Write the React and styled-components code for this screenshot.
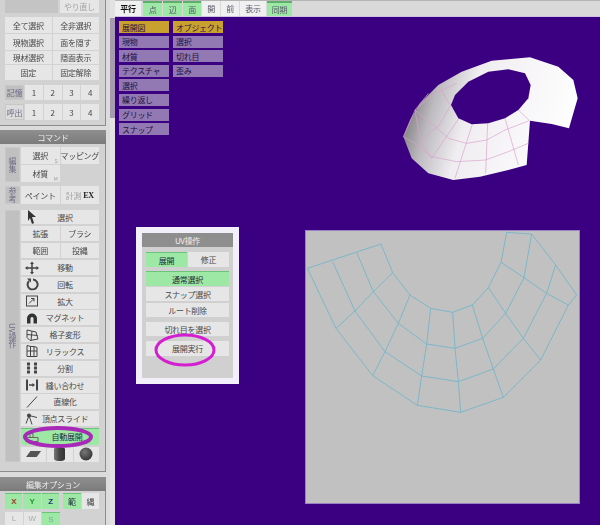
import React from "react";
import styled, { createGlobalStyle } from "styled-components";

const Global = createGlobalStyle`
  html, body { margin: 0; padding: 0; background: #3b0082; }
  * { box-sizing: border-box; }
`;

const Page = styled.div`
  width: 600px;
  height: 525px;
  display: flex;
  overflow: hidden;
  font-family: "Noto Sans CJK JP", "Noto Sans", sans-serif;
  font-size: 8px;
  letter-spacing: -0.3px;
  color: #484848;
  filter: blur(0.3px);
`;

const Side = styled.div`
  width: 115px;
  flex: none;
  display: flex;
  background: #dcdcdc;
`;

const SideInner = styled.div`
  width: 110px;
  display: flex;
  flex-direction: column;
`;

const Scroll = styled.div`
  width: 5px;
  background: #e2e2e2;
  display: flex;
  flex-direction: column;
`;

const Thumb = styled.div`
  height: 100px;
  margin-top: 18px;
  background: #a79bb0;
`;

const TopPanel = styled.div`
  width: 106px;
  height: 126px;
  flex: none;
  background: #d2d2d2;
  border-right: 1px solid #8c8c8c;
  border-bottom: 1px solid #8c8c8c;
  padding: 0 6px 0 5px;
  display: flex;
  flex-direction: column;
`;

const Row = styled.div`
  display: flex;
  gap: ${(p) => p.$gap ?? 1}px;
  height: ${(p) => p.$h}px;
  margin-bottom: ${(p) => p.$mb ?? 1}px;
  flex: none;
`;

const Btn = styled.div`
  flex: ${(p) => p.$flex ?? 1};
  min-width: 0;
  display: flex;
  align-items: center;
  justify-content: center;
  position: relative;
  white-space: nowrap;
  background: ${(p) => (p.$on ? "#9ee8a6" : p.$off ? "transparent" : "#e6e6e6")};
  color: ${(p) => (p.$on ? "#1c2a3a" : p.$dim ? "#a4a4a4" : "#484848")};
  border-top: ${(p) => (p.$on ? "1px solid #6cc47a" : "none")};
  padding: ${(p) => p.$pad ?? "0"};
`;

const Blank = styled.div`
  flex: ${(p) => p.$flex ?? 1};
  background: ${(p) => p.$bg ?? "transparent"};
`;

const Key = styled.span`
  position: absolute;
  right: 2px;
  bottom: 0;
  font-size: 5px;
  color: #999;
`;

const Ex = styled.b`
  font-family: "Liberation Serif", serif;
  font-size: 8px;
  color: #222;
  margin-left: 2px;
`;

const Tag = styled.div`
  width: ${(p) => p.$w ?? 15}px;
  flex: none;
  display: flex;
  align-items: center;
  justify-content: center;
  white-space: nowrap;
  background: ${(p) => (p.$light ? "#dcdcdc" : "#c0c0c0")};
  color: #716a86;
  border: 1px solid #c8c8c8;
`;

const BarHead = styled.div`
  width: 106px;
  height: 14px;
  flex: none;
  display: flex;
  align-items: center;
  justify-content: center;
  color: #eee;
  margin-top: ${(p) => p.$mt}px;
  background: linear-gradient(#8f8f8f, #7b7b7b);
`;

const CmdPanel = styled.div`
  width: 106px;
  height: 328px;
  flex: none;
  background: #d2d2d2;
  border-right: 1px solid #8c8c8c;
  border-bottom: 1px solid #8c8c8c;
  padding: 3px 6px 0 5px;
  display: flex;
  flex-direction: column;
`;

const Group = styled.div`
  display: flex;
  gap: 1px;
  margin-bottom: ${(p) => p.$mb}px;
`;

const VTag = styled(Tag)`
  writing-mode: vertical-rl;
`;

const GroupBody = styled.div`
  flex: 1;
  min-width: 0;
  display: flex;
  flex-direction: column;
`;

const ToolIcon = styled.span`
  position: absolute;
  left: 3px;
  top: 50%;
  transform: translateY(-50%);
  display: flex;
`;

const OptPanel = styled.div`
  width: 106px;
  flex: 1;
  background: #d2d2d2;
  border-right: 1px solid #8c8c8c;
  padding: 2px 6px 0 5px;
`;

const Axis = styled.span`
  font-family: "Liberation Sans", sans-serif;
  font-weight: ${(p) => (p.$thin ? 400 : 700)};
  color: ${(p) => p.$c};
`;

const Main = styled.div`
  flex: 1;
  min-width: 0;
  display: flex;
  flex-direction: column;
`;

const TopBar = styled.div`
  height: 17px;
  flex: none;
  display: flex;
  gap: 1px;
  background: #d9d9d9;
  border-top: 1px solid #b4b4b4;
  border-bottom: 1px solid #cfc4e4;
`;

const Tab = styled.div`
  width: ${(p) => p.$w}px;
  margin-right: ${(p) => p.$mr ?? 0}px;
  display: flex;
  align-items: center;
  justify-content: center;
  background: ${(p) => (p.$on ? "#9ee8a6" : "#f0f0f0")};
  border-top: ${(p) => (p.$on ? "2px solid #5fae6c" : "none")};
  color: ${(p) => (p.$strong ? "#111" : "#556")};
  font-weight: ${(p) => (p.$strong ? 700 : 400)};
`;

const Canvas = styled.div`
  flex: 1;
  position: relative;
  background: #3b0082;
`;

const Menus = styled.div`
  display: flex;
  gap: 4px;
  padding: 4px 0 0 4px;
`;

const MenuCol = styled.div`
  width: 50px;
  display: flex;
  flex-direction: column;
  gap: 2.6px;
`;

const MenuItem = styled.div`
  height: 12px;
  padding-left: 3px;
  display: flex;
  align-items: center;
  white-space: nowrap;
  color: #1d1040;
  background: ${(p) => (p.$on ? "#c9a12f" : "#9379b3")};
`;

const Mesh = styled.svg`
  position: absolute;
  left: 280px;
  top: 13px;
`;

const UvPane = styled.div`
  position: absolute;
  left: 191px;
  top: 214px;
  width: 273px;
  height: 272px;
  background: #c1c1c1;
  box-shadow: 0 0 0 1px #9a80c4;
`;

const UvFloat = styled.div`
  position: absolute;
  left: 21px;
  top: 210px;
  width: 103px;
  height: 157px;
  background: #d0d0d0;
  border: 6px solid #f2effa;
  display: flex;
  flex-direction: column;
`;

const FloatHead = styled.div`
  height: 14px;
  flex: none;
  display: flex;
  align-items: center;
  justify-content: center;
  color: #eee;
  background: #8e8e8e;
  margin-bottom: 5px;
`;

const FloatBody = styled.div`
  padding: 0 4px;
  display: flex;
  flex-direction: column;
`;

const Ring = styled.svg`
  position: absolute;
  left: ${(p) => p.$x}px;
  top: ${(p) => p.$y}px;
  pointer-events: none;
`;

const toPts = (a) => a.map((p) => p.join(",")).join(" ");

const meshOuter = [[25,320],[45,270],[75,220],[130,165],[200,125],[290,92],[405,82],[490,110],[535,150],[548,205],[522,295],[470,282],[405,272],[400,340],[395,405],[340,420],[255,440],[175,450],[100,430],[50,385]];
const meshHole = [[168,225],[180,195],[220,155],[280,125],[340,118],[390,130],[407,165],[400,205],[370,240],[330,265],[280,280],[230,283],[190,265]];
const meshLines = [
  [[370,240],[403,272]],
  [[330,265],[370,405]],
  [[278,280],[272,430]],
  [[232,283],[180,445]],
  [[192,265],[110,385]],
  [[403,272],[330,300],[275,330],[215,340],[160,325],[120,290],[60,240],[100,190]],
  [[400,340],[340,365],[272,390],[185,395],[110,380],[60,340],[25,320]],
  [[168,225],[130,290],[75,330]],
  [[185,160],[120,190],[60,240],[25,320]],
  [[130,165],[165,225]],
  [[60,240],[75,330],[110,385]],
];

const uvLines = [
  [[22,130],[243,57],[278,143],[330,210],[392,250],[458,262],[517,240],[565,188],[603,112],[620,22],[695,27],[767,120],[830,210],[805,240],[722,405],[610,517],[482,562],[352,541],[218,452],[108,310],[22,130]],
  [[170,82],[220,200],[295,295],[380,357],[465,370],[548,340],[617,265],[672,158],[695,27]],
  [[98,110],[165,258],[255,380],[365,453],[475,470],[580,432],[670,340],[740,205],[767,120]],
  [[278,143],[220,200],[165,258],[108,310]],
  [[330,210],[295,295],[255,380],[218,452]],
  [[392,250],[380,357],[365,453],[352,541]],
  [[458,262],[465,370],[475,470],[482,562]],
  [[517,240],[548,340],[580,432],[610,517]],
  [[565,188],[617,265],[670,340],[722,405]],
  [[603,112],[672,158],[740,205],[805,240]],
];

const Ic = ({ children }) => (
  <ToolIcon>
    <svg width="16" height="13" viewBox="0 0 16 13" fill="none" stroke="#444" strokeWidth="1">
      {children}
    </svg>
  </ToolIcon>
);

const tools = [
  ["移動", <><path d="M8 1v11M2 6.500h12" strokeWidth="1.500" /><path d="M8 0l2 2.500H6zM8 13l2-2.500H6zM1 6.500L3.500 4.500v4zM15 6.500L12.500 4.500v4z" fill="#444" stroke="none" /></>],
  ["回転", <><path d="M5 3.500a5 5 0 1 0 4-1.500" strokeWidth="2" /><path d="M3 1h4v4z" fill="#444" stroke="none" /></>],
  ["拡大", <><rect x="2.500" y="1.500" width="11" height="10" /><path d="M5 9l5-5M7 4h3v3" /></>],
  ["マグネット", <path d="M3 12V7a5 5 0 0 1 10 0v5h-3.500V7a1.500 1.500 0 0 0-3 0v5z" fill="#333" stroke="none" />],
  ["格子変形", <><path d="M3 1.500l9 2 2 7-8 1.500-3-3z" /><path d="M8 2.500L7 12M3 6l10.500 1" /></>],
  ["リラックス", <><path d="M3 1l4 1 3 0 3 1v9H3z" /><path d="M6.500 2v10M10 2v10M3 6.500h10" /></>],
  ["分割", <><rect x="3" y="1" width="3" height="11" fill="#444" stroke="none" /><rect x="10" y="1" width="3" height="11" fill="#444" stroke="none" /><path d="M3 4.500h3M3 8.500h3M10 4.500h3M10 8.500h3" stroke="#e6e6e6" /></>],
  ["縫い合わせ", <><rect x="2" y="1" width="2" height="11" fill="#444" stroke="none" /><rect x="12" y="1" width="2" height="11" fill="#444" stroke="none" /><path d="M5 6.500h5" strokeWidth="1.500" /><path d="M11 6.500L8.500 4.500v4z" fill="#444" stroke="none" /></>],
  ["直線化", <path d="M3 12L13 1" />],
  ["頂点スライド", <><circle cx="5" cy="3" r="2" fill="#444" stroke="none" /><path d="M5 3l8 2M5 3l3 9M5 3L2 11" /></>],
];

function App() {
  return (
    <Page>
      <Global />
      <Side>
        <SideInner>
          <TopPanel>
            <Row $h={13} $gap={2} $mb={4}>
              <Blank $flex={1.35} $bg="#c4c4c4" />
              <Btn $dim>やり直し</Btn>
            </Row>
            <Row $h={16}><Btn>全て選択</Btn><Btn>全非選択</Btn></Row>
            <Row $h={16}><Btn>現物選択</Btn><Btn>面を隠す</Btn></Row>
            <Row $h={13}><Btn>現材選択</Btn><Btn>隠面表示</Btn></Row>
            <Row $h={15} $mb={5}><Btn>固定</Btn><Btn>固定解除</Btn></Row>
            <Row $h={15} $mb={4}>
              <Tag $w={19}>記憶</Tag>
              <Btn>1</Btn><Btn>2</Btn><Btn>3</Btn><Btn>4</Btn>
            </Row>
            <Row $h={16} $mb={0}>
              <Tag $w={19} $light>呼出</Tag>
              <Btn>1</Btn><Btn>2</Btn><Btn>3</Btn><Btn>4</Btn>
            </Row>
          </TopPanel>
          <BarHead $mt={4}>コマンド</BarHead>
          <CmdPanel>
            <Group $mb={4}>
              <VTag>編集</VTag>
              <GroupBody>
                <Row $h={17}>
                  <Btn>選択<Key>S</Key></Btn>
                  <Btn>マッピング</Btn>
                </Row>
                <Row $h={17} $mb={0}>
                  <Btn>材質<Key>M</Key></Btn>
                  <Blank />
                </Row>
              </GroupBody>
            </Group>
            <Group $mb={6}>
              <VTag>参考</VTag>
              <GroupBody>
                <Row $h={18} $mb={0}>
                  <Btn>ペイント</Btn>
                  <Btn $dim>計測<Ex>EX</Ex></Btn>
                </Row>
              </GroupBody>
            </Group>
            <Group $mb={0}>
              <VTag>UV操作</VTag>
              <GroupBody>
                <Row $h={14} $mb={2}>
                  <Btn $pad="0 0 0 10px">
                    <ToolIcon>
                      <svg width="14" height="14" viewBox="0 0 14 14"><path d="M4 0l8 7H8l2 6-2 1-2-6-2 3z" fill="#333" /></svg>
                    </ToolIcon>
                    選択
                  </Btn>
                </Row>
                <Row $h={15} $mb={2}><Btn>拡張</Btn><Btn>ブラシ</Btn></Row>
                <Row $h={15} $mb={2}><Btn>範囲</Btn><Btn>投縄</Btn></Row>
                {tools.map(([label, icon]) => (
                  <Row $h={15} $mb={1.8} key={label}>
                    <Btn $pad="0 0 0 10px"><Ic>{icon}</Ic>{label}</Btn>
                  </Row>
                ))}
                <Row $h={17} $mb={2}>
                  <Btn $on $pad="0 0 0 14px">
                    <Ic><path d="M2 7h12v4H2zM6 3h3v4H6z" stroke="#666" /></Ic>
                    自動展開
                  </Btn>
                </Row>
                <Row $h={15} $mb={0}>
                  <Btn>
                    <svg width="16" height="8" viewBox="0 0 18 9"><path d="M5 1h12l-5 7H0z" fill="#555" /></svg>
                  </Btn>
                  <Btn>
                    <svg width="11" height="14" viewBox="0 0 11 14">
                      <defs>
                        <linearGradient id="cyl" x1="0" x2="1" y1="0" y2="0">
                          <stop offset="0" stopColor="#777" />
                          <stop offset="0.5" stopColor="#444" />
                          <stop offset="1" stopColor="#333" />
                        </linearGradient>
                      </defs>
                      <path d="M0 2a5.500 2 0 0 1 11 0v10a5.500 2 0 0 1-11 0z" fill="url(#cyl)" />
                    </svg>
                  </Btn>
                  <Btn>
                    <svg width="14" height="14" viewBox="0 0 14 14">
                      <defs>
                        <radialGradient id="ball" cx="0.4" cy="0.35" r="0.7">
                          <stop offset="0" stopColor="#777" />
                          <stop offset="1" stopColor="#333" />
                        </radialGradient>
                      </defs>
                      <circle cx="7" cy="7" r="6.500" fill="url(#ball)" />
                    </svg>
                  </Btn>
                </Row>
              </GroupBody>
            </Group>
          </CmdPanel>
          <BarHead $mt={5}>編集オプション</BarHead>
          <OptPanel>
            <Row $h={16} $mb={3}>
              <Btn $on><Axis $c="#a33">X</Axis></Btn>
              <Btn $on><Axis $c="#1f9a2a">Y</Axis></Btn>
              <Btn $on><Axis $c="#237">Z</Axis></Btn>
              <Btn $on style={{ marginLeft: 3 }}>範</Btn>
              <Btn>縄</Btn>
            </Row>
            <Row $h={13} $mb={0}>
              <Btn $dim><Axis $thin $c="#aaa">L</Axis></Btn>
              <Btn $dim><Axis $thin $c="#aaa">W</Axis></Btn>
              <Btn $on><Axis $thin $c="#7a9">S</Axis></Btn>
              <Blank $flex={2.2} />
            </Row>
          </OptPanel>
        </SideInner>
        <Scroll><Thumb /></Scroll>
      </Side>
      <Main>
        <TopBar>
          <Tab $w={26} $strong $mr={1}>平行</Tab>
          <Tab $w={19} $on>点</Tab>
          <Tab $w={19} $on>辺</Tab>
          <Tab $w={18} $on>面</Tab>
          <Tab $w={18}>開</Tab>
          <Tab $w={18}>前</Tab>
          <Tab $w={26}>表示</Tab>
          <Tab $w={25} $on>同期</Tab>
        </TopBar>
        <Canvas>
          <Menus>
            <MenuCol>
              <MenuItem $on>展開図</MenuItem>
              <MenuItem>現物</MenuItem>
              <MenuItem>材質</MenuItem>
              <MenuItem>テクスチャ</MenuItem>
              <MenuItem>選択</MenuItem>
              <MenuItem>繰り返し</MenuItem>
              <MenuItem>グリッド</MenuItem>
              <MenuItem>スナップ</MenuItem>
            </MenuCol>
            <MenuCol>
              <MenuItem $on>オブジェクト</MenuItem>
              <MenuItem>選択</MenuItem>
              <MenuItem>切れ目</MenuItem>
              <MenuItem>歪み</MenuItem>
            </MenuCol>
          </Menus>

          <Mesh width="190" height="170" viewBox="0 0 570 510">
            <defs>
              <linearGradient id="shade" x1="0" x2="1" y1="0.3" y2="0.5">
                <stop offset="0" stopColor="#6a6a6a" />
                <stop offset="0.18" stopColor="#bdbabf" />
                <stop offset="0.38" stopColor="#f0edf1" />
                <stop offset="1" stopColor="#ffffff" />
              </linearGradient>
              <mask id="hole">
                <rect width="570" height="510" fill="#fff" />
                <polygon points={toPts(meshHole)} fill="#000" />
              </mask>
            </defs>
            <g mask="url(#hole)">
              <polygon points={toPts(meshOuter)} fill="url(#shade)" />
              {meshLines.map((l, i) => (
                <polyline key={i} points={toPts(l)} fill="none" stroke="#d9a2cc" strokeWidth="2" />
              ))}
            </g>
          </Mesh>

          <UvPane>
            <svg width="273" height="272" viewBox="18 18 819 816">
              {uvLines.map((l, i) => (
                <polyline key={i} points={toPts(l)} fill="none" stroke="#6fb5c9" strokeWidth="2.500" />
              ))}
            </svg>
          </UvPane>

          <UvFloat>
            <FloatHead>UV操作</FloatHead>
            <FloatBody>
              <Row $h={15} $mb={4}>
                <Btn $on>展開</Btn>
                <Btn>修正</Btn>
              </Row>
              <Row $h={15} $mb={1}><Btn $on>通常選択</Btn></Row>
              <Row $h={14} $mb={2}><Btn>スナップ選択</Btn></Row>
              <Row $h={14} $mb={5}><Btn>ルート削除</Btn></Row>
              <Row $h={14} $mb={5}><Btn>切れ目を選択</Btn></Row>
              <Row $h={15} $mb={0}><Btn>展開実行</Btn></Row>
            </FloatBody>
          </UvFloat>

          <Ring $x={35} $y={315} width="70" height="36" viewBox="0 0 70 36">
            <ellipse cx="35" cy="18" rx="29" ry="15" fill="none" stroke="#d41fd0" strokeWidth="3" />
          </Ring>
          <Ring $x={-99} $y={405} width="84" height="30" viewBox="0 0 84 30">
            <ellipse cx="42" cy="15" rx="33" ry="9" fill="none" stroke="#a828b8" strokeWidth="4" />
          </Ring>
        </Canvas>
      </Main>
    </Page>
  );
}

export default App;
